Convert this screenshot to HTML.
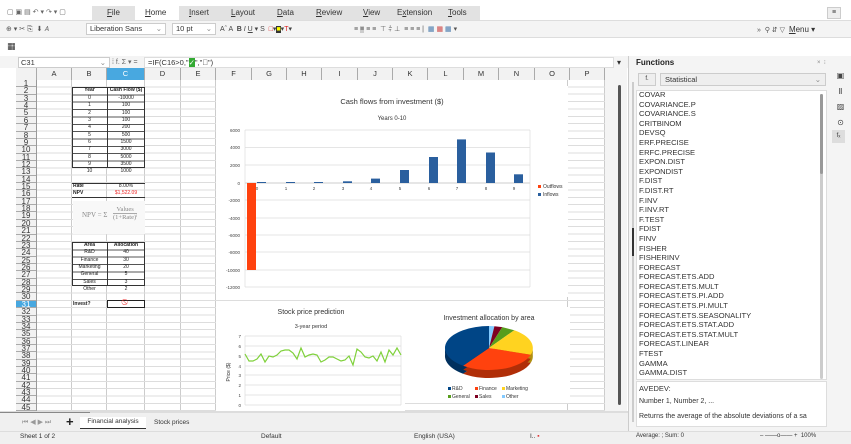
<!DOCTYPE html><html><head><meta charset="utf-8"><style>
*{margin:0;padding:0;box-sizing:border-box}
body{width:851px;height:444px;overflow:hidden;background:#fff;font-family:"Liberation Sans","DejaVu Sans",sans-serif;color:#333;position:relative}
.a{position:absolute}
.t{font-size:7.5px;white-space:nowrap}
.rh{position:absolute;left:16px;top:80px;width:21px;height:331px;display:flex;flex-direction:column;background:#f2f2f2;border-right:1px solid #999}
.rh div{flex:1;font-size:8px;line-height:7px;text-align:center;border-bottom:1px solid #aaa;color:#333;overflow:hidden}
.ch{position:absolute;top:68px;height:12px;border-right:1px solid #aaa;font-size:7.5px;text-align:center;line-height:12px;background:#f2f2f2}
.c{position:absolute;font-size:5px;text-align:center;color:#222;line-height:7px;height:7.36px}
.fl div{height:9.6px;font-size:7.6px;line-height:9.6px;color:#333}
</style></head><body>
<div class="a" style="left:0;top:0;width:851px;height:20px;background:#fff"></div>
<div class="a" style="left:92px;top:6px;width:388px;height:14px;background:#e2e2e2"></div>
<div class="a" style="left:135px;top:6px;width:44px;height:15px;background:#fff"></div>
<div class="a t" style="left:7px;top:8px;font-size:7px;color:#666">▢ ▣ ▤ ↶ ▾ ↷ ▾ ▢</div>
<div class="a t" style="left:107px;top:8px;font-size:8px"><u>F</u>ile</div>
<div class="a t" style="left:145px;top:8px;font-size:8px"><u>H</u>ome</div>
<div class="a t" style="left:189px;top:8px;font-size:8px"><u>I</u>nsert</div>
<div class="a t" style="left:231px;top:8px;font-size:8px"><u>L</u>ayout</div>
<div class="a t" style="left:277px;top:8px;font-size:8px"><u>D</u>ata</div>
<div class="a t" style="left:316px;top:8px;font-size:8px"><u>R</u>eview</div>
<div class="a t" style="left:363px;top:8px;font-size:8px"><u>V</u>iew</div>
<div class="a t" style="left:397px;top:8px;font-size:8px">E<u>x</u>tension</div>
<div class="a t" style="left:448px;top:8px;font-size:8px"><u>T</u>ools</div>
<div class="a" style="left:827px;top:7px;width:14px;height:12px;border:1px solid #ccc;background:#eee;font-size:7px;text-align:center;line-height:10px">≡</div>
<div class="a" style="left:0;top:20px;width:851px;height:18px;background:#f4f4f4;border-top:1px solid #ddd;border-bottom:1px solid #ddd"></div>
<div class="a t" style="left:6px;top:25px;font-size:7px;color:#555">⊕ ▾ ✂ ⎘ &nbsp;⬇ 𝘈</div>
<div class="a" style="left:86px;top:23px;width:80px;height:12px;background:#fff;border:1px solid #ccc;font-size:7.5px;line-height:10px;padding-left:3px">Liberation Sans<span style="float:right;margin-right:3px;color:#888">⌄</span></div>
<div class="a" style="left:172px;top:23px;width:44px;height:12px;background:#fff;border:1px solid #ccc;font-size:7.5px;line-height:10px;padding-left:3px">10 pt<span style="float:right;margin-right:3px;color:#888">⌄</span></div>
<div class="a t" style="left:220px;top:25px;font-size:7px;color:#444">Aˆ A &nbsp;<b>B</b> <i>I</i> <u>U</u> ▾ S &nbsp;<span style="color:#d22">□</span>▾<span style="background:#333;color:#ff0">■</span>▾<span style="color:#d22">T</span>▾</div>
<div class="a t" style="left:354px;top:25px;font-size:7px;color:#555">≡ <span style="background:#ccc">≡</span> ≡ ≡ &nbsp;⊤ ⫩ ⊥ &nbsp;≡ ≡ ≡ | &nbsp;<span style="color:#47a">▦</span> <span style="color:#c44">▦</span> <span style="color:#47a">▦</span> ▾</div>
<div class="a t" style="left:757px;top:25px;font-size:7px;color:#555">» &nbsp;⚲ ⇵ ▽ &nbsp;<span style="font-size:8px;color:#333"><u>M</u>enu ▾</span></div>
<div class="a t" style="left:7px;top:41px;font-size:9px;color:#333">▦</div>
<div class="a" style="left:0;top:56px;width:630px;height:12px;background:#f4f4f4"></div>
<div class="a" style="left:18px;top:57px;width:92px;height:11px;background:#fff;border:1px solid #ccc;font-size:7.5px;line-height:9px;padding-left:2px">C31<span style="float:right;margin-right:3px;color:#888">⌄</span></div>
<div class="a t" style="left:112px;top:58px;font-size:7px;color:#666">⁞ f. Σ ▾ =</div>
<div class="a" style="left:144px;top:57px;width:470px;height:11px;background:#fff;border:1px solid #ddd;font-size:7.5px;line-height:9px;padding-left:3px">=IF(C16&gt;0,"<span style="background:#3a3;color:#fff">✓</span>","<span style="color:#d22">⃠</span>")</div>
<div class="a t" style="left:617px;top:58px;font-size:8px">▾</div>
<div class="a" style="left:16px;top:68px;width:596px;height:12px;background:#f2f2f2;border-bottom:1px solid #999"></div>
<div class="ch" style="left:16px;width:21px"></div>
<div class="ch" style="left:37px;width:35px">A</div>
<div class="ch" style="left:72px;width:35px">B</div>
<div class="ch" style="left:107px;width:38px;background:#48a8e0;color:#fff">C</div>
<div class="ch" style="left:145px;width:36px">D</div>
<div class="ch" style="left:181px;width:35px">E</div>
<div class="ch" style="left:216px;width:36px">F</div>
<div class="ch" style="left:252px;width:35px">G</div>
<div class="ch" style="left:287px;width:35px">H</div>
<div class="ch" style="left:322px;width:36px">I</div>
<div class="ch" style="left:358px;width:35px">J</div>
<div class="ch" style="left:393px;width:35px">K</div>
<div class="ch" style="left:428px;width:36px">L</div>
<div class="ch" style="left:464px;width:35px">M</div>
<div class="ch" style="left:499px;width:36px">N</div>
<div class="ch" style="left:535px;width:35px">O</div>
<div class="ch" style="left:570px;width:35px">P</div>
<div class="a" style="left:37px;top:80px;width:568px;height:331px;background-image:repeating-linear-gradient(to bottom,transparent 0,transparent 6.36px,#ddd 6.36px,#ddd 7.36px),linear-gradient(to right,transparent 34px,#ccc 34px,#ccc 35px,transparent 35px,transparent 69px,#ccc 69px,#ccc 70px,transparent 70px,transparent 107px,#ccc 107px,#ccc 108px,transparent 108px,transparent 143px,#ccc 143px,#ccc 144px,transparent 144px,transparent 178px,#ccc 178px,#ccc 179px,transparent 179px,transparent 530px,#ccc 530px,#ccc 531px,transparent 531px,transparent 567px,#ccc 567px)"></div>
<div class="rh"><div>1</div><div>2</div><div>3</div><div>4</div><div>5</div><div>6</div><div>7</div><div>8</div><div>9</div><div>10</div><div>11</div><div>12</div><div>13</div><div>14</div><div>15</div><div>16</div><div>17</div><div>18</div><div>19</div><div>20</div><div>21</div><div>22</div><div>23</div><div>24</div><div>25</div><div>26</div><div>27</div><div>28</div><div>29</div><div>30</div><div style="background:#48a8e0;color:#fff">31</div><div>32</div><div>33</div><div>34</div><div>35</div><div>36</div><div>37</div><div>38</div><div>39</div><div>40</div><div>41</div><div>42</div><div>43</div><div>44</div><div>45</div></div>
<div class="a" style="left:72px;top:87.4px;width:73px;height:81px;border:1px solid #333;background:repeating-linear-gradient(to bottom,transparent 0,transparent 6.36px,#555 6.36px,#555 7.36px),#fff"></div>
<div class="a" style="left:107px;top:87.4px;width:1px;height:81px;background:#333"></div>
<div class="c" style="left:72px;top:87.4px;width:35px;font-weight:bold">Year</div>
<div class="c" style="left:107px;top:87.4px;width:38px;font-weight:bold">Cash Flow ($)</div>
<div class="c" style="left:72px;top:94.8px;width:35px">0</div><div class="c" style="left:107px;top:94.8px;width:38px">-10000</div>
<div class="c" style="left:72px;top:102.2px;width:35px">1</div><div class="c" style="left:107px;top:102.2px;width:38px">100</div>
<div class="c" style="left:72px;top:109.5px;width:35px">2</div><div class="c" style="left:107px;top:109.5px;width:38px">100</div>
<div class="c" style="left:72px;top:116.9px;width:35px">3</div><div class="c" style="left:107px;top:116.9px;width:38px">100</div>
<div class="c" style="left:72px;top:124.2px;width:35px">4</div><div class="c" style="left:107px;top:124.2px;width:38px">200</div>
<div class="c" style="left:72px;top:131.6px;width:35px">5</div><div class="c" style="left:107px;top:131.6px;width:38px">500</div>
<div class="c" style="left:72px;top:139px;width:35px">6</div><div class="c" style="left:107px;top:139px;width:38px">1500</div>
<div class="c" style="left:72px;top:146.3px;width:35px">7</div><div class="c" style="left:107px;top:146.3px;width:38px">3000</div>
<div class="c" style="left:72px;top:153.7px;width:35px">8</div><div class="c" style="left:107px;top:153.7px;width:38px">5000</div>
<div class="c" style="left:72px;top:161px;width:35px">9</div><div class="c" style="left:107px;top:161px;width:38px">3500</div>
<div class="c" style="left:72px;top:168.4px;width:35px">10</div><div class="c" style="left:107px;top:168.4px;width:38px">1000</div>
<div class="a" style="left:72px;top:183px;width:73px;height:15px;border-top:1px solid #333;border-bottom:1px solid #333"></div>
<div class="c" style="left:73px;top:183px;font-weight:bold;text-align:left">Rate</div>
<div class="c" style="left:107px;top:183px;width:38px">8.00%</div>
<div class="c" style="left:73px;top:190.4px;font-weight:bold;text-align:left">NPV</div>
<div class="c" style="left:107px;top:190.4px;width:38px;color:#e22">$1,522.09</div>
<div class="a" style="left:73px;top:201px;width:72px;height:33px;background:#f8f8f8"></div>
<div class="a t" style="left:82px;top:211px;font-family:'Liberation Serif',serif;font-size:7px;color:#888">NPV = Σ</div>
<div class="a t" style="left:113px;top:206px;font-family:'Liberation Serif',serif;font-size:6.5px;color:#888;text-align:center">Values<br><span style="border-top:1px solid #aaa">(1+Rate)ⁱ</span></div>
<div class="a" style="left:72px;top:241.9px;width:73px;height:44.2px;border:1px solid #333;background:repeating-linear-gradient(to bottom,transparent 0,transparent 6.36px,#555 6.36px,#555 7.36px),#fff"></div>
<div class="a" style="left:107px;top:241.9px;width:1px;height:44px;background:#333"></div>
<div class="c" style="left:72px;top:241.9px;width:35px;font-weight:bold">Area</div><div class="c" style="left:107px;top:241.9px;width:38px;font-weight:bold">Allocation</div>
<div class="c" style="left:72px;top:249.3px;width:35px">R&amp;D</div><div class="c" style="left:107px;top:249.3px;width:38px">40</div>
<div class="c" style="left:72px;top:256.6px;width:35px">Finance</div><div class="c" style="left:107px;top:256.6px;width:38px">30</div>
<div class="c" style="left:72px;top:264px;width:35px">Marketing</div><div class="c" style="left:107px;top:264px;width:38px">20</div>
<div class="c" style="left:72px;top:271.4px;width:35px">General</div><div class="c" style="left:107px;top:271.4px;width:38px">5</div>
<div class="c" style="left:72px;top:278.7px;width:35px">Sales</div><div class="c" style="left:107px;top:278.7px;width:38px">3</div>
<div class="c" style="left:72px;top:286px;width:35px">Other</div><div class="c" style="left:107px;top:286px;width:38px">2</div>
<div class="c" style="left:73px;top:300.8px;font-weight:bold;text-align:left">Invest?</div>
<div class="a" style="left:107px;top:300.3px;width:38px;height:8px;border:1.5px solid #222;background:#fff;font-size:6px;text-align:center;line-height:5px;color:#e22">⃠</div>
<svg class="a" style="left:0;top:0" width="851" height="444" font-family="Liberation Sans,sans-serif">
<g>
<rect x="216" y="86" width="352" height="211" fill="#fff"/>
<text x="392" y="104" font-size="7.5" text-anchor="middle" fill="#333">Cash flows from investment ($)</text>
<text x="392" y="120" font-size="6" text-anchor="middle" fill="#333">Years 0-10</text>
<g stroke="#ddd" stroke-width="0.7">
<line x1="245" y1="130" x2="530" y2="130"/><line x1="245" y1="147.5" x2="530" y2="147.5"/><line x1="245" y1="165" x2="530" y2="165"/><line x1="245" y1="183" x2="530" y2="183" stroke="#bbb"/><line x1="245" y1="200" x2="530" y2="200"/><line x1="245" y1="218" x2="530" y2="218"/><line x1="245" y1="235" x2="530" y2="235"/><line x1="245" y1="252" x2="530" y2="252"/><line x1="245" y1="270" x2="530" y2="270"/><line x1="245" y1="287" x2="530" y2="287"/>
<line x1="245" y1="130" x2="245" y2="287"/><line x1="530" y1="130" x2="530" y2="287"/></g>
<g font-size="4.5" fill="#444" text-anchor="end"><text x="240" y="132">6000</text><text x="240" y="149">4000</text><text x="240" y="167">2000</text><text x="240" y="185">0</text><text x="240" y="202">-2000</text><text x="240" y="220">-4000</text><text x="240" y="237">-6000</text><text x="240" y="254">-8000</text><text x="240" y="272">-10000</text><text x="240" y="289">-12000</text></g>
<g font-size="4.5" fill="#444" text-anchor="middle"><text x="257" y="190">0</text><text x="286" y="190">1</text><text x="314" y="190">2</text><text x="343" y="190">3</text><text x="371" y="190">4</text><text x="400" y="190">5</text><text x="429" y="190">6</text><text x="457" y="190">7</text><text x="486" y="190">8</text><text x="514" y="190">9</text></g>
<rect x="247" y="183" width="9" height="87" fill="#ff420e"/>
<g fill="#2a5f9e"><rect x="257" y="182" width="9" height="1"/><rect x="286" y="182" width="9" height="1"/><rect x="314" y="182" width="9" height="1"/><rect x="343" y="181.3" width="9" height="1.7"/><rect x="371" y="178.6" width="9" height="4.4"/><rect x="400" y="170" width="9" height="13"/><rect x="429" y="157" width="9" height="26"/><rect x="457" y="139.4" width="9" height="43.6"/><rect x="486" y="152.5" width="9" height="30.5"/><rect x="514" y="174.3" width="9" height="8.7"/></g>
<rect x="538" y="185" width="3" height="3" fill="#ff420e"/><text x="543" y="188" font-size="5" fill="#333">Outflows</text>
<rect x="538" y="193" width="3" height="3" fill="#2a5f9e"/><text x="543" y="196" font-size="5" fill="#333">Inflows</text>
</g>
<g>
<rect x="216" y="302" width="189" height="109" fill="#fff"/>
<text x="311" y="314" font-size="7" text-anchor="middle" fill="#333">Stock price prediction</text>
<text x="311" y="328" font-size="5.5" text-anchor="middle" fill="#333">3-year period</text>
<g stroke="#ddd" stroke-width="0.7"><line x1="245" y1="336" x2="401" y2="336"/><line x1="245" y1="346" x2="401" y2="346"/><line x1="245" y1="356" x2="401" y2="356"/><line x1="245" y1="366" x2="401" y2="366"/><line x1="245" y1="375" x2="401" y2="375"/><line x1="245" y1="385" x2="401" y2="385"/><line x1="245" y1="395" x2="401" y2="395"/><line x1="245" y1="405" x2="401" y2="405"/><line x1="245" y1="336" x2="245" y2="405"/><line x1="401" y1="336" x2="401" y2="405"/></g>
<g font-size="4.5" fill="#444" text-anchor="end"><text x="241" y="338">7</text><text x="241" y="348">6</text><text x="241" y="358">5</text><text x="241" y="368">4</text><text x="241" y="377">3</text><text x="241" y="387">2</text><text x="241" y="397">1</text><text x="241" y="407">0</text></g>
<text x="230" y="372" font-size="5" fill="#333" transform="rotate(-90 230 372)" text-anchor="middle">Price ($)</text>
<polyline fill="none" stroke="#7fd13b" stroke-width="1.2" points="245,354 249,361 253,361 257,359 261,354 265,362 269,356 273,357 277,355 281,351 285,350 289,350 293,353 297,359 301,348 305,357 309,355 313,354 317,355 321,362 325,360 329,357 333,357 337,359 341,361 345,360 349,356 353,365 357,349 361,352 365,357 369,358 373,356 377,361 381,352 385,362 389,350 393,355 397,348 401,355"/>
</g>
<g>
<rect x="405" y="307" width="165" height="96" fill="#fff"/>
<text x="489" y="320" font-size="7" text-anchor="middle" fill="#333">Investment allocation by area</text>
<g transform="translate(0,8)">
<path d="M489,348 L514.3,330.2 A44,22 0 0 1 530.8,354.8 Z" fill="#b09010"/><path d="M489,348 L530.8,354.8 A44,22 0 0 1 463.1,365.8 Z" fill="#b02e08"/><path d="M489,348 L463.1,365.8 A44,22 0 0 1 489,326 Z" fill="#00305e"/>
</g>
<g transform="translate(0,4)">
<path d="M489,348 L514.3,330.2 A44,22 0 0 1 530.8,354.8 Z" fill="#b09010"/><path d="M489,348 L530.8,354.8 A44,22 0 0 1 463.1,365.8 Z" fill="#b02e08"/><path d="M489,348 L463.1,365.8 A44,22 0 0 1 489,326 Z" fill="#00305e"/>
</g>
<path d="M489,348 L489,326 L494.4,326.2 Z" fill="#83caff"/><path d="M489,348 L494.4,326.2 L502.3,327.1 Z" fill="#7e0021"/><path d="M489,348 L502.3,327.1 L514.3,330.2 Z" fill="#579d1c"/><path d="M489,348 L514.3,330.2 A44,22 0 0 1 530.8,354.8 Z" fill="#ffd320"/><path d="M489,348 L530.8,354.8 A44,22 0 0 1 463.1,365.8 Z" fill="#ff420e"/><path d="M489,348 L463.1,365.8 A44,22 0 0 1 489,326 Z" fill="#004586"/>
<g font-size="5" fill="#333"><rect x="448" y="387" width="3" height="3" fill="#004586"/><text x="452" y="390">R&amp;D</text><rect x="475" y="387" width="3" height="3" fill="#ff420e"/><text x="479" y="390">Finance</text><rect x="502" y="387" width="3" height="3" fill="#ffd320"/><text x="506" y="390">Marketing</text>
<rect x="448" y="395" width="3" height="3" fill="#579d1c"/><text x="452" y="398">General</text><rect x="475" y="395" width="3" height="3" fill="#7e0021"/><text x="479" y="398">Sales</text><rect x="502" y="395" width="3" height="3" fill="#83caff"/><text x="506" y="398">Other</text></g>
</g>
</svg>
<div class="a" style="left:605px;top:68px;width:22px;height:345px;background:#f4f4f4"></div>
<div class="a" style="left:618px;top:85px;width:3px;height:320px;background:#555;border-radius:2px"></div>
<div class="a" style="left:628px;top:56px;width:1px;height:375px;background:#ccc"></div>
<div class="a" style="left:0;top:411px;width:628px;height:2px;background:#ddd"></div>
<div class="a" style="left:0;top:412px;width:90px;height:2px;background:#888"></div>
<div class="a" style="left:0;top:413px;width:628px;height:18px;background:#f0f0f0"></div>
<div class="a t" style="left:22px;top:418px;font-size:7px;color:#999">⏮ ◀ ▶ ⏭</div>
<div class="a t" style="left:66px;top:414px;font-size:13px;font-weight:bold;color:#222">+</div>
<div class="a" style="left:80px;top:417px;width:66px;height:12px;background:#fff;border-bottom:1.5px solid #333;font-size:6.5px;text-align:center;line-height:10px">Financial analysis</div>
<div class="a t" style="left:154px;top:419px;font-size:6.5px">Stock prices</div>
<div class="a" style="left:0;top:431px;width:851px;height:13px;background:#f0f0f0;border-top:1px solid #ddd"></div>
<div class="a t" style="left:20px;top:433px;font-size:6.5px">Sheet 1 of 2</div>
<div class="a t" style="left:261px;top:433px;font-size:6.5px">Default</div>
<div class="a t" style="left:414px;top:433px;font-size:6.5px">English (USA)</div>
<div class="a t" style="left:530px;top:433px;font-size:6.5px">I.. <span style="color:#d33">▪</span></div>
<div class="a t" style="left:636px;top:433px;font-size:6px">Average: ; Sum: 0</div>
<div class="a t" style="left:760px;top:433px;font-size:6px">– ——o—— + &nbsp;100%</div>
<div class="a" style="left:629px;top:56px;width:222px;height:375px;background:#f4f4f4"></div>
<div class="a t" style="left:636px;top:58px;font-size:8px;font-weight:bold;color:#222">Functions</div>
<div class="a t" style="left:817px;top:59px;font-size:6px;color:#888">× &nbsp;⁝</div>
<div class="a" style="left:638px;top:73px;width:18px;height:13px;border:1px solid #ccc;background:#eee;font-size:6px;text-align:center;line-height:11px">f.</div>
<div class="a" style="left:660px;top:73px;width:166px;height:13px;border:1px solid #ccc;background:#eee;font-size:7.5px;line-height:11px;padding-left:4px">Statistical<span style="float:right;margin-right:4px;color:#888">⌄</span></div>
<div class="a" style="left:636px;top:90px;width:191px;height:290px;background:#fff;border:1px solid #ddd"></div>
<div class="a fl" style="left:639px;top:90px;width:180px;height:289px;overflow:hidden">
<div>COVAR</div><div>COVARIANCE.P</div><div>COVARIANCE.S</div><div>CRITBINOM</div><div>DEVSQ</div><div>ERF.PRECISE</div><div>ERFC.PRECISE</div><div>EXPON.DIST</div><div>EXPONDIST</div><div>F.DIST</div><div>F.DIST.RT</div><div>F.INV</div><div>F.INV.RT</div><div>F.TEST</div><div>FDIST</div><div>FINV</div><div>FISHER</div><div>FISHERINV</div><div>FORECAST</div><div>FORECAST.ETS.ADD</div><div>FORECAST.ETS.MULT</div><div>FORECAST.ETS.PI.ADD</div><div>FORECAST.ETS.PI.MULT</div><div>FORECAST.ETS.SEASONALITY</div><div>FORECAST.ETS.STAT.ADD</div><div>FORECAST.ETS.STAT.MULT</div><div>FORECAST.LINEAR</div><div>FTEST</div><div>GAMMA</div><div>GAMMA.DIST</div><div>GAMMA.INV</div>
</div>
<div class="a" style="left:820px;top:94px;width:3px;height:285px;background:#ccc;border-radius:2px"></div>
<div class="a" style="left:820px;top:94px;width:3px;height:80px;background:#999;border-radius:2px"></div>
<div class="a" style="left:632px;top:82px;width:2px;height:340px;background:#ccc"></div>
<div class="a" style="left:632px;top:228px;width:2px;height:28px;background:#333"></div>
<div class="a" style="left:636px;top:381px;width:191px;height:46px;background:#fff;border:1px solid #ddd;overflow:hidden;font-size:7.5px;color:#333;padding:2px">
<div style="height:14px">AVEDEV:</div><div style="height:15px;font-size:7px">Number 1, Number 2, ...</div><div style="white-space:nowrap;font-size:7px">Returns the average of the absolute deviations of a sa</div></div>
<div class="a" style="left:830px;top:68px;width:21px;height:80px;font-size:8px;color:#444;text-align:center;line-height:15.5px">▣<br>Ⅱ<br>▨<br>⊙</div>
<div class="a" style="left:832px;top:130px;width:13px;height:13px;background:#ddd;font-size:6px;text-align:center;line-height:13px">fₓ</div>
</body></html>
